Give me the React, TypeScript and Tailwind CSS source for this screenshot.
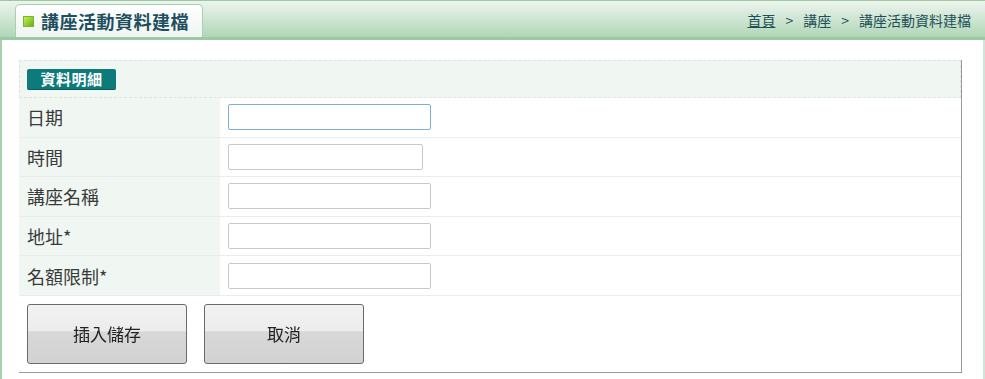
import React from 'react';

const cjk = { fontFamily: '"Noto Sans CJK TC", "Noto Sans", sans-serif' };

const rows = [
  { label: '日期', width: 'w-[203px]', focus: true },
  { label: '時間', width: 'w-[195px]' },
  { label: '講座名稱', width: 'w-[203px]' },
  { label: '地址*', width: 'w-[203px]' },
  { label: '名額限制*', width: 'w-[203px]' },
];

export default function App() {
  return (
    <div className="w-[985px] h-[379px] bg-white overflow-hidden" style={cjk}>
      <div className="h-[40px] border-t border-[#9cc8a4] bg-gradient-to-b from-[#edf5ee] to-[#b0d6b7] border-b-[3px] border-b-[#9cc8a4] flex items-end justify-between pl-[15px] pr-[14px]">
        <div className="h-[33px] w-[188px] rounded-t-[5px] border border-b-0 border-[#a9cfb0] bg-gradient-to-b from-white to-[#eef5ef] flex items-center pl-[7px] gap-[7px]">
          <span className="w-[11px] h-[11px] bg-gradient-to-br from-[#c8ec5a] to-[#6aae18] border border-[#7ab82a]" />
          <span className="text-[18px] font-bold text-[#1e4f60] leading-none tracking-[0.5px]">講座活動資料建檔</span>
        </div>
        <div className="h-[34px] flex items-center text-[14px] text-[#1e4f5a] gap-[10px]">
          <span className="underline">首頁</span>
          <span>&gt;</span>
          <span>講座</span>
          <span>&gt;</span>
          <span>講座活動資料建檔</span>
        </div>
      </div>
      <div className="flex h-[339px]">
        <div className="w-[2px] bg-[#a6d0ae]" />
        <div className="flex-1 pl-[17px] pt-[20px]">
          <div className="w-[943px] border-r border-b border-[#999999]">
            <div className="h-[38px] bg-[#f0f6f2] border border-dashed border-[#dde6dd] flex items-center pl-[7px]">
              <span className="h-[21px] w-[89px] rounded-[2px] bg-[#0d7b7a] border-b border-[#0a5a5a] text-white font-bold text-[15px] flex items-center justify-center tracking-[0.5px] leading-none">資料明細</span>
            </div>
            {rows.map(r => (
              <div key={r.label} className="flex h-[39.6px] border-b border-[#ececec]">
                <div className="w-[201px] bg-[#f0f6f2] flex items-center pl-[8px] text-[18px] text-[#3a3a3a] leading-none">
                  {r.label}
                </div>
                <div className="flex-1 flex items-center pl-[8px]">
                  <input
                    className={`${r.width} h-[26px] bg-white border rounded-[2px] outline-none ${r.focus ? 'border-[#7eaed6]' : 'border-[#c8c8c8]'}`}
                    autoFocus={r.focus}
                  />
                </div>
              </div>
            ))}
            <div className="h-[76px] flex items-center pl-[8px] gap-[17px]">
              {['插入儲存', '取消'].map(t => (
                <button
                  key={t}
                  className="w-[160px] h-[60px] rounded-[3px] border border-[#6a6a6a] bg-[linear-gradient(to_bottom,#f2f2f2_0%,#ececec_45%,#d8d8d8_46%,#d2d2d2_100%)] text-[17px] text-[#222222]"
                >
                  {t}
                </button>
              ))}
            </div>
          </div>
        </div>
        <div className="w-[2px] bg-[#cfe6d4]" />
      </div>
    </div>
  );
}
